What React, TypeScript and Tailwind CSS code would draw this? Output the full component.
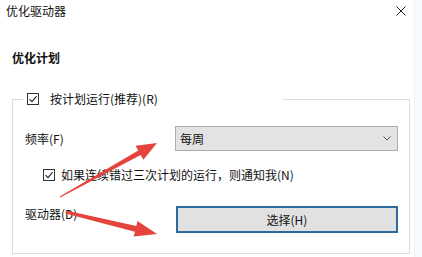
import React from "react";

const font = { fontFamily: '"Noto Sans CJK SC", "Noto Sans", sans-serif' };

const Check = () => (
  <span className="flex h-[12px] w-[12px] shrink-0 items-center justify-center border border-[#333] bg-white">
    <svg width="10" height="10" viewBox="0 0 10 10" fill="none">
      <path d="M1.5 5.2 L4 7.6 L8.6 2.2" stroke="#222" strokeWidth="1.1" />
    </svg>
  </span>
);

const Arrows = () => (
  <svg
    className="pointer-events-none absolute left-0 top-0"
    width="422"
    height="257"
    viewBox="0 0 422 257"
  >
    <polygon
      fill="#e5443d"
      points="59.8,196.6 138.3,150.5 135.6,145.7 157,143 143.4,159.7 140.7,154.9 60.2,197.4"
    />
    <polygon
      fill="#e5443d"
      points="66,210.5 136.3,225.9 137.5,221 157,234 133.7,236.6 134.9,231.7 65.5,213.5"
    />
  </svg>
);

export default function App() {
  return (
    <div
      className="relative h-[257px] w-[422px] overflow-hidden bg-white text-[12px] text-[#111]"
      style={font}
    >
      <div className="flex h-[257px] w-[422px]">
        <div className="flex w-[414px] flex-col">
          {/* title bar */}
          <div className="flex h-[22px] items-center justify-between pl-[6px] pr-[8px] leading-[14px]">
            <span>优化驱动器</span>
            <svg width="10" height="10" viewBox="0 0 10 10">
              <path d="M0.5 0.5 L9.5 9.5 M9.5 0.5 L0.5 9.5" stroke="#222" strokeWidth="1" />
            </svg>
          </div>

          <div className="mt-[29px] pl-[12px] font-bold leading-[14px]">优化计划</div>

          <fieldset className="ml-[12px] mt-[27px] h-[162px] w-[398px] border border-[#dcdcdc] pl-[12px] pr-[11px]">
            <legend className="-ml-[2px] flex h-[14px] w-[260px] items-center gap-[11px] pl-[4px] leading-[14px]">
              <Check />
              <span>按计划运行(推荐)(R)</span>
            </legend>

            <div className="mt-[20px] flex items-center justify-between">
              <span className="leading-[14px]">频率(F)</span>
              <div className="flex h-[25px] w-[223px] items-center justify-between border border-[#acacac] bg-[#e3e3e3] pl-[4px] pr-[6px]">
                <span className="leading-[14px]">每周</span>
                <svg width="8" height="5" viewBox="0 0 8 5">
                  <path d="M0.5 0.5 L4 4 L7.5 0.5" stroke="#555" strokeWidth="1" fill="none" />
                </svg>
              </div>
            </div>

            <div className="ml-[18px] mt-[17px] flex items-center gap-[6px] leading-[14px]">
              <Check />
              <span>如果连续错过三次计划的运行，则通知我(N)</span>
            </div>

            <div className="mt-[24px] flex items-center justify-between">
              <span className="-mt-[12px] leading-[14px]">驱动器(D)</span>
              <div className="flex h-[27px] w-[222px] items-center justify-center border-2 border-[#2f6a9e] bg-[#e1e1e1] leading-[14px]">
                选择(H)
              </div>
            </div>
          </fieldset>
        </div>
        <div className="flex-1 border-l border-[#eaf4f8] bg-[#f6fbfd]" />
      </div>
      <Arrows />
    </div>
  );
}
